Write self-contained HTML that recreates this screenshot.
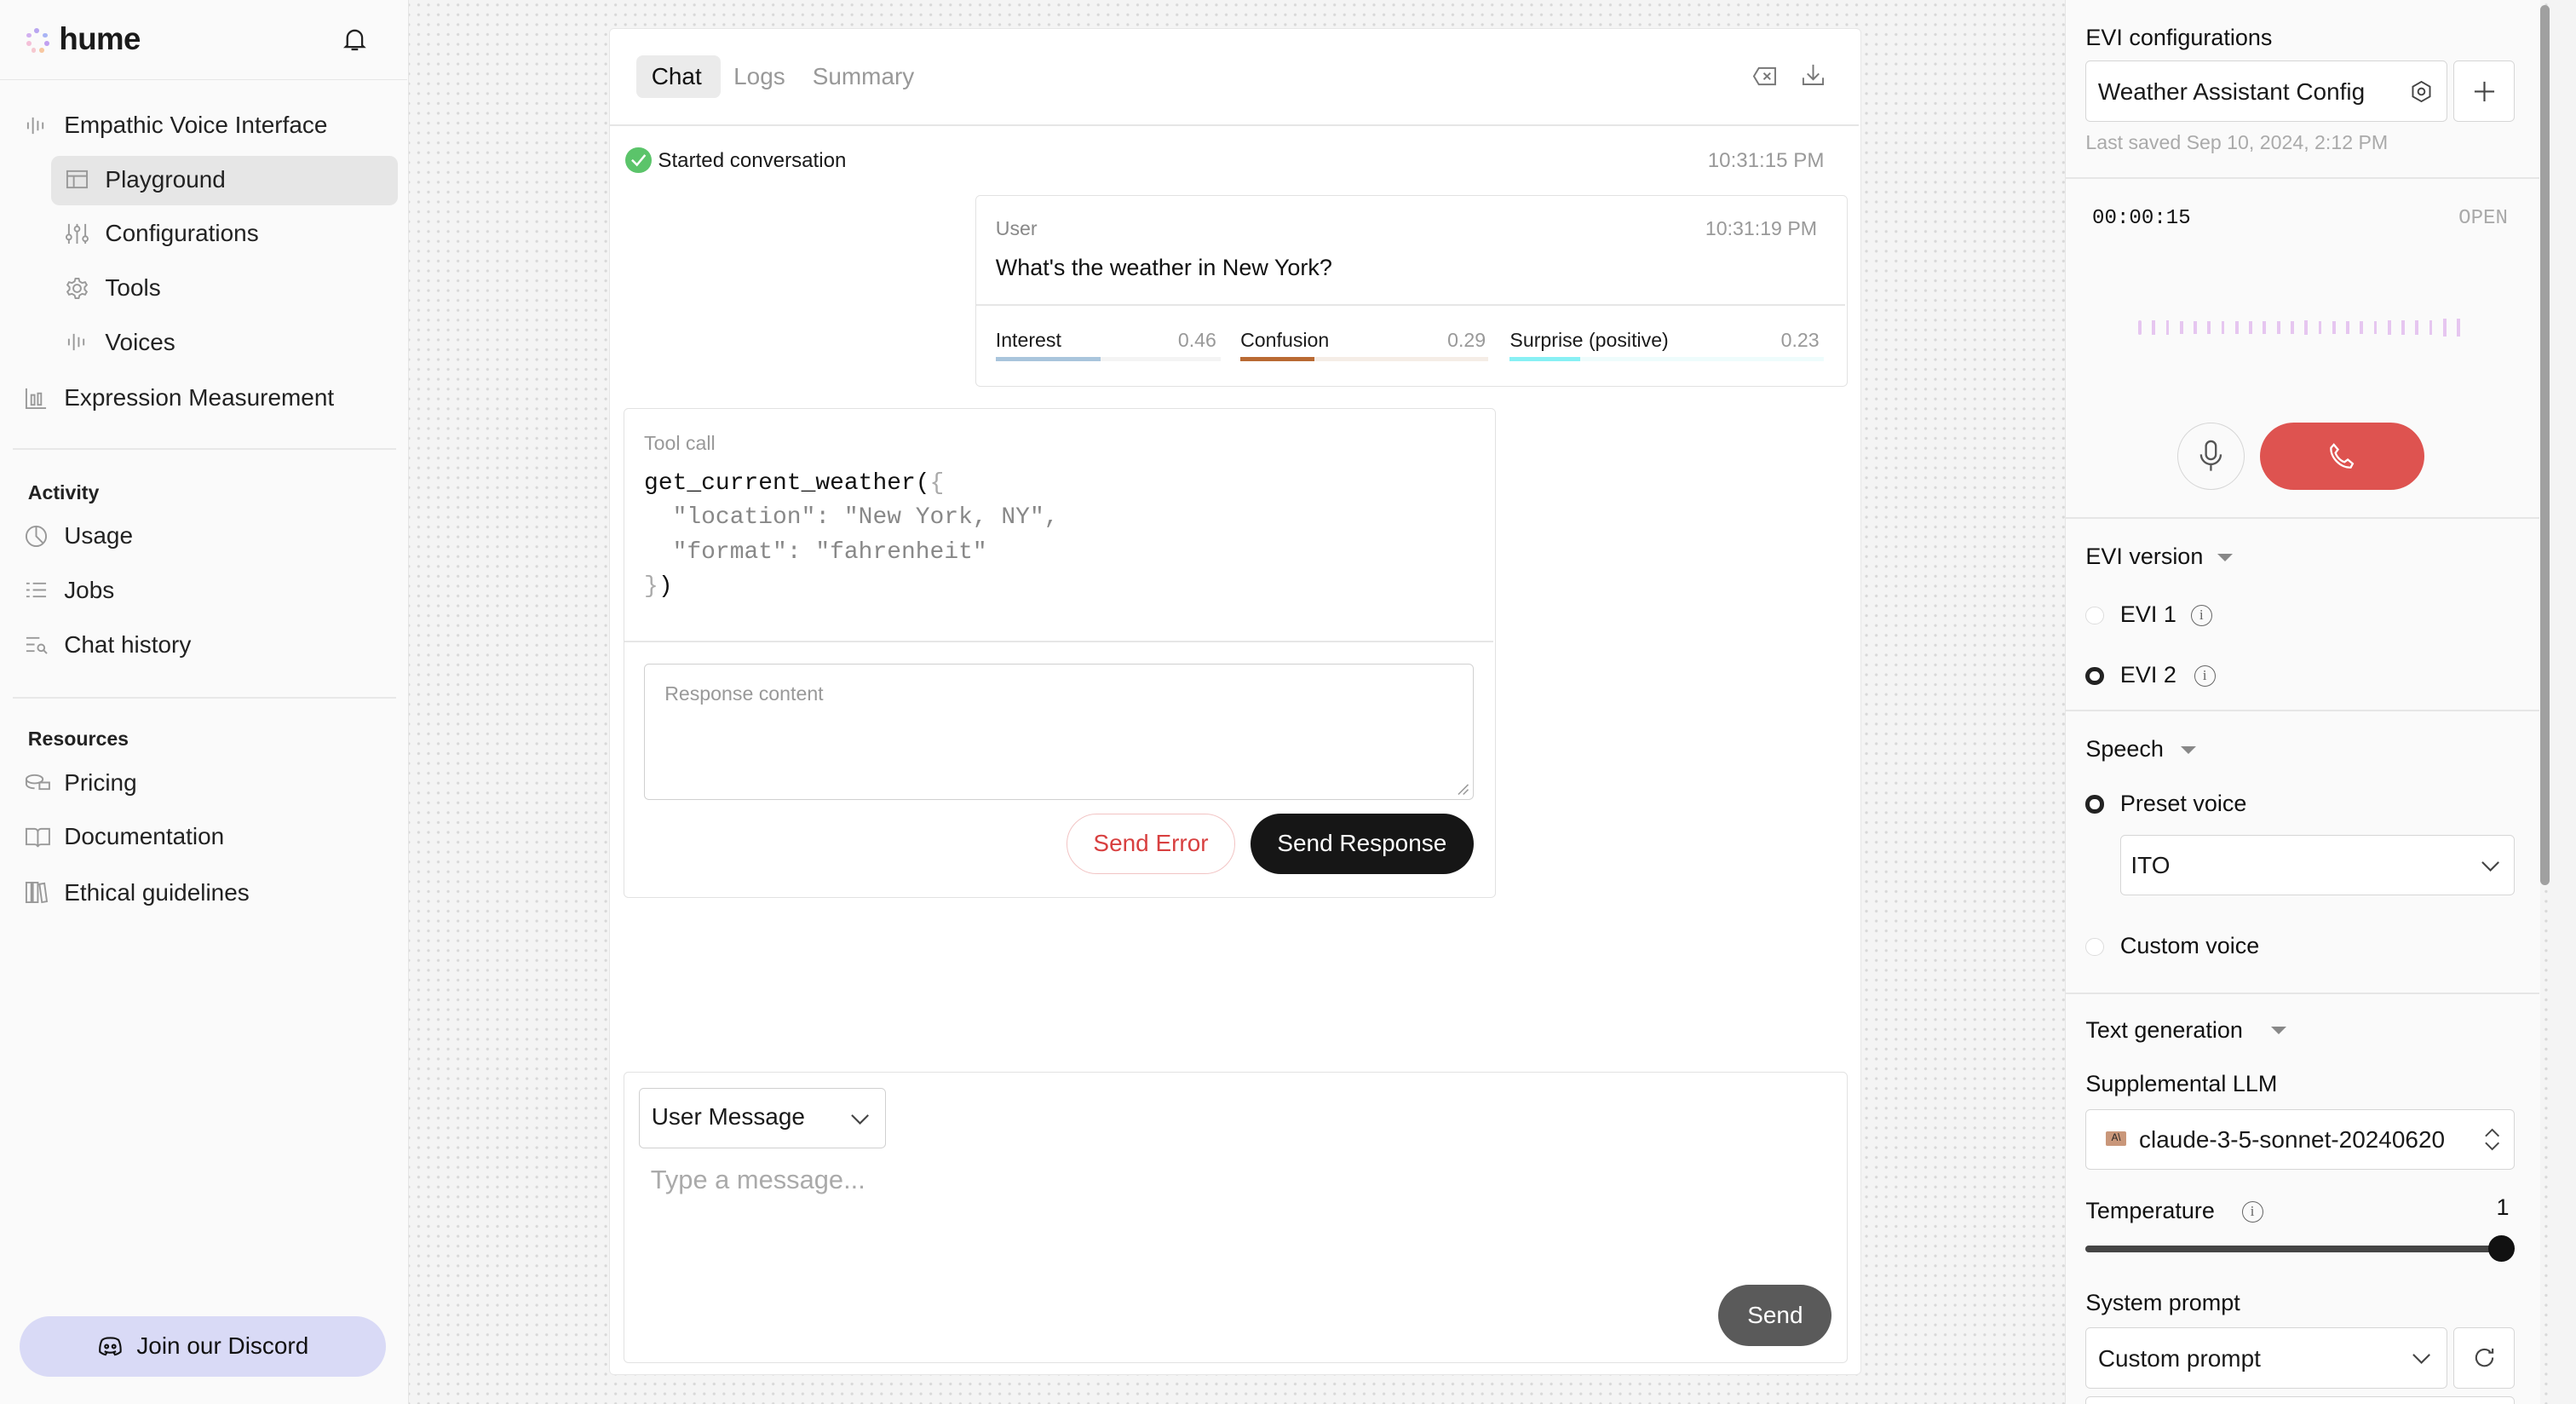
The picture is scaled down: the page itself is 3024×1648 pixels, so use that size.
<!DOCTYPE html>
<html><head><meta charset="utf-8"><style>
*{box-sizing:border-box;margin:0;padding:0}
html,body{width:3024px;height:1648px;overflow:hidden}
body{font-family:"Liberation Sans",sans-serif;color:#1a1a1a;background:#f4f4f4}
#z{zoom:1.92857;width:1568px;height:855px;position:relative;overflow:hidden;
background-color:#f4f4f4;background-image:radial-gradient(circle,#d8d8d8 0.7px,transparent 1px);background-size:6px 6px}
.a{position:absolute}
.side{left:0;top:0;width:249px;height:855px;background:#fafafa;border-right:1px solid #e6e6e6}
.nav{position:absolute;font-size:14.5px;color:#222;display:flex;align-items:center}
.nav svg{position:absolute;left:-24px}
.sec{position:absolute;left:17px;font-size:12px;font-weight:bold;color:#222}
.hr{position:absolute;left:8px;width:233px;height:1px;background:#e8e8e8}
.card{left:371px;top:17px;width:762px;height:820px;background:#fff;border:1px solid #e6e6e6;border-radius:3px}
.right{left:1257px;top:0;width:289px;height:855px;background:#fafafa;border-left:1px solid #e6e6e6}
.rh{position:absolute;left:0;width:288px;height:1px;background:#e6e6e6}
.t{position:absolute;white-space:nowrap}
.box{position:absolute;border:1px solid #d6d6d6;border-radius:3px;background:#fff}
.mono{font-family:"Liberation Mono",monospace}
.radio{position:absolute;width:11px;height:11px;border-radius:50%;border:1px solid #ddd;background:#fff}
.radio.on{border:3px solid #222}
.info{position:absolute;width:13px;height:13px;border:1px solid #666;border-radius:50%;font-size:9px;text-align:center;line-height:11px;color:#666;font-family:"Liberation Serif",serif}
.caret{position:absolute;width:0;height:0;border-left:5px solid transparent;border-right:5px solid transparent;border-top:5px solid #888}
</style></head><body><div id="z">

<!-- left sidebar -->
<div class="a side">
  <div class="a" style="left:14px;top:16px;width:18px;height:18px">
    <span class="a" style="left:7px;top:1px;width:3px;height:3px;border-radius:50%;background:#b9a6f0"></span>
    <span class="a" style="left:12px;top:4px;width:3px;height:3px;border-radius:50%;background:#a9b4f5"></span>
    <span class="a" style="left:13px;top:9px;width:3px;height:3px;border-radius:50%;background:#c1a0f0"></span>
    <span class="a" style="left:10px;top:13px;width:3px;height:3px;border-radius:50%;background:#f7c7a0"></span>
    <span class="a" style="left:5px;top:13px;width:3px;height:3px;border-radius:50%;background:#f6c8d0"></span>
    <span class="a" style="left:2px;top:9px;width:3px;height:3px;border-radius:50%;background:#f4c0d8"></span>
    <span class="a" style="left:2px;top:4px;width:3px;height:3px;border-radius:50%;background:#d2b0f0"></span>
  </div>
  <div class="t" style="left:36px;top:13px;font-size:19px;font-weight:bold;letter-spacing:-0.3px">hume</div>
  <svg class="a" style="left:208px;top:16px" width="16" height="16" viewBox="0 0 16 16" fill="none" stroke="#222" stroke-width="1.2"><path d="M3.5 11.5V7a4.5 4.5 0 0 1 9 0v4.5l1 1H2.5z"/><path d="M6 14h4"/></svg>
  <div class="a" style="left:0;top:48px;width:248px;height:1px;background:#e6e6e6"></div>

  <div class="nav" style="left:39px;top:68px"><svg width="14" height="14" viewBox="0 0 14 14" stroke="#999" stroke-width="1"><path d="M2 5v4M5 2v10M8 4v6M11 5v4"/></svg>Empathic Voice Interface</div>
  <div class="a" style="left:31px;top:95px;width:211px;height:30px;background:#e6e6e6;border-radius:5px"></div>
  <div class="nav" style="left:64px;top:101px"><svg width="14" height="14" viewBox="0 0 14 14" fill="none" stroke="#999" stroke-width="1"><rect x="1" y="2" width="12" height="10"/><path d="M1 5h12M5 5v7"/></svg>Playground</div>
  <div class="nav" style="left:64px;top:134px"><svg width="14" height="14" viewBox="0 0 14 14" fill="none" stroke="#999" stroke-width="1"><path d="M2 1v12M7 1v12M12 1v12"/><circle cx="2" cy="9" r="1.5" fill="#fafafa"/><circle cx="7" cy="4" r="1.5" fill="#fafafa"/><circle cx="12" cy="10" r="1.5" fill="#fafafa"/></svg>Configurations</div>
  <div class="nav" style="left:64px;top:167px"><svg width="14" height="14" viewBox="0 0 14 14" fill="none" stroke="#999" stroke-width="1"><circle cx="7" cy="7" r="2.3"/><path d="M6 1h2l.5 1.8 1.6.9 1.8-.5 1 1.7-1.3 1.4v1.4l1.3 1.4-1 1.7-1.8-.5-1.6.9L8 13H6l-.5-1.8-1.6-.9-1.8.5-1-1.7 1.3-1.4V6.3L1.1 4.9l1-1.7 1.8.5 1.6-.9z"/></svg>Tools</div>
  <div class="nav" style="left:64px;top:200px"><svg width="14" height="14" viewBox="0 0 14 14" stroke="#999" stroke-width="1"><path d="M2 5v4M5 2v10M8 4v6M11 5v4"/></svg>Voices</div>
  <div class="nav" style="left:39px;top:234px"><svg width="14" height="14" viewBox="0 0 14 14" fill="none" stroke="#999" stroke-width="1"><path d="M1 1v12h12M4 5h2v6H4zM8 4h2v7H8z"/></svg>Expression Measurement</div>
  <div class="hr" style="top:273px"></div>
  <div class="sec" style="top:293px">Activity</div>
  <div class="nav" style="left:39px;top:318px"><svg width="14" height="14" viewBox="0 0 14 14" fill="none" stroke="#999" stroke-width="1"><circle cx="7" cy="7" r="6"/><path d="M7 1v6l4 4"/></svg>Usage</div>
  <div class="nav" style="left:39px;top:351px"><svg width="14" height="14" viewBox="0 0 14 14" fill="none" stroke="#999" stroke-width="1"><path d="M5 3h8M5 7h8M5 11h8M1 3h2M1 7h2M1 11h2"/></svg>Jobs</div>
  <div class="nav" style="left:39px;top:384px"><svg width="14" height="14" viewBox="0 0 14 14" fill="none" stroke="#999" stroke-width="1"><path d="M1 3h8M1 7h5M1 11h5"/><circle cx="10" cy="9" r="2"/><path d="M11.5 10.5l2 2"/></svg>Chat history</div>
  <div class="hr" style="top:424px"></div>
  <div class="sec" style="top:443px">Resources</div>
  <div class="nav" style="left:39px;top:468px"><svg width="16" height="14" viewBox="0 0 16 14" fill="none" stroke="#999" stroke-width="1"><ellipse cx="6" cy="5" rx="5" ry="2.5"/><path d="M1 5v3c0 1.4 2.2 2.5 5 2.5M9 7h6v4H9z"/></svg>Pricing</div>
  <div class="nav" style="left:39px;top:501px"><svg width="16" height="14" viewBox="0 0 16 14" fill="none" stroke="#999" stroke-width="1"><path d="M1 2h5a2 2 0 0 1 2 2v9a2 2 0 0 0-2-1.5H1zM15 2h-5a2 2 0 0 0-2 2v9a2 2 0 0 1 2-1.5h5z"/></svg>Documentation</div>
  <div class="nav" style="left:39px;top:535px"><svg width="14" height="14" viewBox="0 0 14 14" fill="none" stroke="#999" stroke-width="1"><path d="M1 1h3v12H1zM5 1h3v12H5zM9 2l3-.5 1.5 11-3 .5z"/></svg>Ethical guidelines</div>

  <div class="a" style="left:12px;top:801px;width:223px;height:37px;border-radius:19px;background:#d9daf6;display:flex;align-items:center;justify-content:center;font-size:14.5px;color:#111">
    <svg width="16" height="14" viewBox="0 0 16 14" fill="none" stroke="#111" stroke-width="1.1" style="margin-right:8px"><path d="M3 3c2-1.2 3-1.2 5-1.2s3 0 5 1.2c1 2 1.5 4.5 1.3 7.3-1.2 1-2.4 1.5-3.4 1.7l-.9-1.5M3 3C2 5 1.5 7.5 1.7 10.3c1.2 1 2.4 1.5 3.4 1.7l.9-1.5M4.5 10c2.3 1 4.7 1 7 0"/><circle cx="5.8" cy="7" r="1"/><circle cx="10.2" cy="7" r="1"/></svg>Join our Discord</div>
</div>

<!-- center card -->
<div class="a card">
  <div class="a" style="left:16px;top:16px;width:51px;height:26px;border-radius:4px;background:#ebebeb"></div>
  <div class="t" style="left:25px;top:21px;font-size:14.5px;color:#111">Chat</div>
  <div class="t" style="left:75px;top:21px;font-size:14.5px;color:#999">Logs</div>
  <div class="t" style="left:123px;top:21px;font-size:14.5px;color:#999">Summary</div>
  <svg class="a" style="left:695px;top:22px" width="16" height="14" viewBox="0 0 16 14" fill="none" stroke="#777" stroke-width="1"><path d="M4 2h10v10H4L1 7z"/><path d="M7 5l4 4M11 5l-4 4"/></svg>
  <svg class="a" style="left:725px;top:20px" width="14" height="16" viewBox="0 0 14 16" fill="none" stroke="#777" stroke-width="1"><path d="M7 2v9M3.5 7.5 7 11l3.5-3.5M1 10v4h12v-4"/></svg>
  <div class="a" style="left:0;top:58px;width:760px;height:1px;background:#e6e6e6"></div>

  <div class="a" style="left:9px;top:72px;width:16px;height:16px;border-radius:50%;background:#5bc46a"></div>
  <svg class="a" style="left:12px;top:76px" width="10" height="8" viewBox="0 0 10 8" fill="none" stroke="#fff" stroke-width="1.3"><path d="M1 4l3 3 5-6"/></svg>
  <div class="t" style="left:29px;top:73px;font-size:12.5px">Started conversation</div>
  <div class="t" style="left:668px;top:73px;font-size:12.5px;color:#999">10:31:15 PM</div>

  <div class="box" style="left:222px;top:101px;width:531px;height:117px;border-color:#e2e2e2">
    <div class="t" style="left:12px;top:13px;font-size:12px;color:#888">User</div>
    <div class="t" style="left:444px;top:13px;font-size:12px;color:#999">10:31:19 PM</div>
    <div class="t" style="left:12px;top:36px;font-size:14px;color:#111">What's the weather in New York?</div>
    <div class="a" style="left:0;top:66px;width:529px;height:1px;background:#e6e6e6"></div>
    <div class="t" style="left:12px;top:81px;font-size:12px">Interest</div>
    <div class="t" style="left:123px;top:81px;font-size:12px;color:#999">0.46</div>
    <div class="a" style="left:12px;top:98px;width:137px;height:3px;background:#f4f4f4"><div style="width:64px;height:3px;background:#a9c5dc"></div></div>
    <div class="t" style="left:161px;top:81px;font-size:12px">Confusion</div>
    <div class="t" style="left:287px;top:81px;font-size:12px;color:#999">0.29</div>
    <div class="a" style="left:161px;top:98px;width:151px;height:3px;background:#f5ede6"><div style="width:45px;height:3px;background:#b96a33"></div></div>
    <div class="t" style="left:325px;top:81px;font-size:12px">Surprise (positive)</div>
    <div class="t" style="left:490px;top:81px;font-size:12px;color:#999">0.23</div>
    <div class="a" style="left:325px;top:98px;width:191px;height:3px;background:#eefcfc"><div style="width:43px;height:3px;background:#88f0f4"></div></div>
  </div>

  <div class="box" style="left:8px;top:231px;width:531px;height:298px;border-color:#e2e2e2">
    <div class="t" style="left:12px;top:14px;font-size:12px;color:#999">Tool call</div>
    <div class="t mono" style="left:12px;top:35px;font-size:14.5px;line-height:21px;color:#111">get_current_weather(<span style="color:#aaa">{</span><br><span style="color:#888">&nbsp;&nbsp;"location": "New York, NY",</span><br><span style="color:#888">&nbsp;&nbsp;"format": "fahrenheit"</span><br><span style="color:#aaa">}</span>)</div>
    <div class="a" style="left:0;top:141px;width:529px;height:1px;background:#e6e6e6"></div>
    <div class="box" style="left:12px;top:155px;width:505px;height:83px;border-color:#d0d0d0">
      <div class="t" style="left:12px;top:11px;font-size:12px;color:#999">Response content</div>
      <svg class="a" style="right:2px;bottom:2px" width="8" height="8" viewBox="0 0 8 8" stroke="#999" stroke-width="0.8"><path d="M1 7l6-6M4 7l3-3"/></svg>
    </div>
    <div class="a" style="left:269px;top:246px;width:103px;height:37px;border:1px solid #f2c4c4;border-radius:19px;color:#d84040;font-size:14.5px;display:flex;align-items:center;justify-content:center">Send Error</div>
    <div class="a" style="left:381px;top:246px;width:136px;height:37px;background:#161616;border-radius:19px;color:#fff;font-size:14.5px;display:flex;align-items:center;justify-content:center">Send Response</div>
  </div>

  <div class="box" style="left:8px;top:635px;width:745px;height:177px;border-color:#e2e2e2">
    <div class="box" style="left:9px;top:9px;width:150px;height:37px;border-color:#d0d0d0;font-size:14.5px;padding:9px 0 0 7px">User Message
      <svg class="a" style="right:9px;top:15px" width="12" height="7" viewBox="0 0 12 7" fill="none" stroke="#444" stroke-width="1.1"><path d="M1 1l5 5 5-5"/></svg></div>
    <div class="t" style="left:16px;top:56px;font-size:16px;color:#aaa">Type a message...</div>
    <div class="a" style="left:666px;top:129px;width:69px;height:37px;border-radius:19px;background:#5a5a5a;color:#fff;font-size:14.5px;display:flex;align-items:center;justify-content:center">Send</div>
  </div>
</div>

<!-- right panel -->
<div class="a right">
  <div class="t" style="left:12px;top:15px;font-size:14px;color:#111">EVI configurations</div>
  <div class="box" style="left:12px;top:37px;width:220px;height:37px;font-size:14.5px;padding:10px 0 0 7px">Weather Assistant Config
    <svg class="a" style="right:8px;top:11px" width="14" height="14" viewBox="0 0 14 14" fill="none" stroke="#444" stroke-width="1"><path d="M7 1l5.2 3v6L7 13 1.8 10V4z"/><circle cx="7" cy="7" r="2"/></svg></div>
  <div class="box" style="left:236px;top:37px;width:37px;height:37px"><svg class="a" style="left:11px;top:11px" width="14" height="14" viewBox="0 0 14 14" stroke="#444" stroke-width="1.1"><path d="M7 1v12M1 7h12"/></svg></div>
  <div class="t" style="left:12px;top:80px;font-size:12px;color:#aaa">Last saved Sep 10, 2024, 2:12 PM</div>
  <div class="rh" style="top:108px"></div>
  <div class="t mono" style="left:16px;top:126px;font-size:12.5px;color:#111">00:00:15</div>
  <div class="t mono" style="left:239px;top:126px;font-size:12.5px;color:#aaa">OPEN</div>
  <div class="a" style="left:44px;top:194px;width:196px;height:11px;display:flex;justify-content:space-between;align-items:center">
    <i style="width:2px;height:9px;background:#e6c6f0;border-radius:1px"></i><i style="width:2px;height:9px;background:#e6c6f0"></i><i style="width:2px;height:9px;background:#e6c6f0"></i><i style="width:2px;height:8px;background:#e6c6f0"></i><i style="width:2px;height:8px;background:#e6c6f0"></i><i style="width:2px;height:8px;background:#e6c6f0"></i><i style="width:2px;height:8px;background:#e6c6f0"></i><i style="width:2px;height:8px;background:#e6c6f0"></i><i style="width:2px;height:8px;background:#e6c6f0"></i><i style="width:2px;height:8px;background:#e6c6f0"></i><i style="width:2px;height:8px;background:#e6c6f0"></i><i style="width:2px;height:8px;background:#e6c6f0"></i><i style="width:2px;height:9px;background:#e6c6f0"></i><i style="width:2px;height:8px;background:#e6c6f0"></i><i style="width:2px;height:8px;background:#e6c6f0"></i><i style="width:2px;height:8px;background:#e6c6f0"></i><i style="width:2px;height:8px;background:#e6c6f0"></i><i style="width:2px;height:8px;background:#e6c6f0"></i><i style="width:2px;height:9px;background:#e6c6f0"></i><i style="width:2px;height:9px;background:#e6c6f0"></i><i style="width:2px;height:9px;background:#e6c6f0"></i><i style="width:2px;height:9px;background:#e6c6f0"></i><i style="width:2px;height:11px;background:#e6c6f0"></i><i style="width:2px;height:11px;background:#e6c6f0"></i>
  </div>
  <div class="a" style="left:68px;top:257px;width:41px;height:41px;border-radius:50%;border:1px solid #d6d6d6;background:#fafafa">
    <svg class="a" style="left:12px;top:10px" width="16" height="20" viewBox="0 0 16 20" fill="none" stroke="#555" stroke-width="1.2"><rect x="5" y="1" width="6" height="11" rx="3"/><path d="M2 9a6 6 0 0 0 12 0M8 15v4"/></svg></div>
  <div class="a" style="left:118px;top:257px;width:100px;height:41px;border-radius:21px;background:#de5350">
    <svg class="a" style="left:41px;top:12px" width="18" height="18" viewBox="0 0 18 18" fill="none" stroke="#fff" stroke-width="1.2"><path d="M4 1.5l2.5 3-1.5 2c.8 2.5 3 4.8 5.5 5.6l2-1.5 3 2.5-1.2 2.3c-6 .5-12.5-6-12-12z"/></svg></div>
  <div class="rh" style="top:315px"></div>

  <div class="t" style="left:12px;top:331px;font-size:14px;color:#111">EVI version</div>
  <div class="caret" style="left:92px;top:337px"></div>
  <div class="radio" style="left:12px;top:369px"></div>
  <div class="t" style="left:33px;top:366px;font-size:14px;color:#111">EVI 1</div>
  <div class="info" style="left:76px;top:368px">i</div>
  <div class="radio on" style="left:12px;top:406px"></div>
  <div class="t" style="left:33px;top:403px;font-size:14px;color:#111">EVI 2</div>
  <div class="info" style="left:78px;top:405px">i</div>
  <div class="rh" style="top:432px"></div>

  <div class="t" style="left:12px;top:448px;font-size:14px;color:#111">Speech</div>
  <div class="caret" style="left:70px;top:454px"></div>
  <div class="radio on" style="left:12px;top:484px"></div>
  <div class="t" style="left:33px;top:481px;font-size:14px;color:#111">Preset voice</div>
  <div class="box" style="left:33px;top:508px;width:240px;height:37px;font-size:14.5px;padding:10px 0 0 6px">ITO
    <svg class="a" style="right:8px;top:15px" width="12" height="7" viewBox="0 0 12 7" fill="none" stroke="#444" stroke-width="1.1"><path d="M1 1l5 5 5-5"/></svg></div>
  <div class="radio" style="left:12px;top:571px"></div>
  <div class="t" style="left:33px;top:568px;font-size:14px;color:#111">Custom voice</div>
  <div class="rh" style="top:604px"></div>

  <div class="t" style="left:12px;top:619px;font-size:14px;color:#111">Text generation</div>
  <div class="caret" style="left:125px;top:625px"></div>
  <div class="t" style="left:12px;top:652px;font-size:14px;color:#111">Supplemental LLM</div>
  <div class="box" style="left:12px;top:675px;width:261px;height:37px;font-size:14.5px;padding:10px 0 0 32px">claude-3-5-sonnet-20240620
    <div class="a" style="left:12px;top:13px;width:12px;height:9px;background:#c9977a;border-radius:1px;font-size:6px;text-align:center;line-height:9px;color:#222">A\</div>
    <svg class="a" style="right:8px;top:11px" width="10" height="14" viewBox="0 0 10 14" fill="none" stroke="#444" stroke-width="1"><path d="M1 5l4-4 4 4M1 9l4 4 4-4"/></svg></div>
  <div class="t" style="left:12px;top:729px;font-size:14px;color:#111">Temperature</div>
  <div class="info" style="left:107px;top:731px">i</div>
  <div class="t" style="left:262px;top:727px;font-size:14px;color:#111">1</div>
  <div class="a" style="left:12px;top:758px;width:257px;height:4px;background:#444;border-radius:2px"></div>
  <div class="a" style="left:257px;top:752px;width:16px;height:16px;border-radius:50%;background:#111"></div>
  <div class="t" style="left:12px;top:785px;font-size:14px;color:#111">System prompt</div>
  <div class="box" style="left:12px;top:808px;width:220px;height:37px;font-size:14.5px;padding:10px 0 0 7px">Custom prompt
    <svg class="a" style="right:9px;top:15px" width="12" height="7" viewBox="0 0 12 7" fill="none" stroke="#444" stroke-width="1.1"><path d="M1 1l5 5 5-5"/></svg></div>
  <div class="box" style="left:236px;top:808px;width:37px;height:37px"><svg class="a" style="left:11px;top:11px" width="14" height="14" viewBox="0 0 14 14" fill="none" stroke="#444" stroke-width="1.1"><path d="M12 7a5 5 0 1 1-1.5-3.5M12 1.5V4H9.5"/></svg></div>
  <div class="box" style="left:12px;top:850px;width:261px;height:20px"></div>
</div>
<div class="a" style="left:1546px;top:3px;width:6px;height:536px;background:#a0a0a0;border-radius:3px"></div>
<div class="a" style="left:1552px;top:0;width:16px;height:855px;background:#f4f4f4"></div>

</div></body></html>
